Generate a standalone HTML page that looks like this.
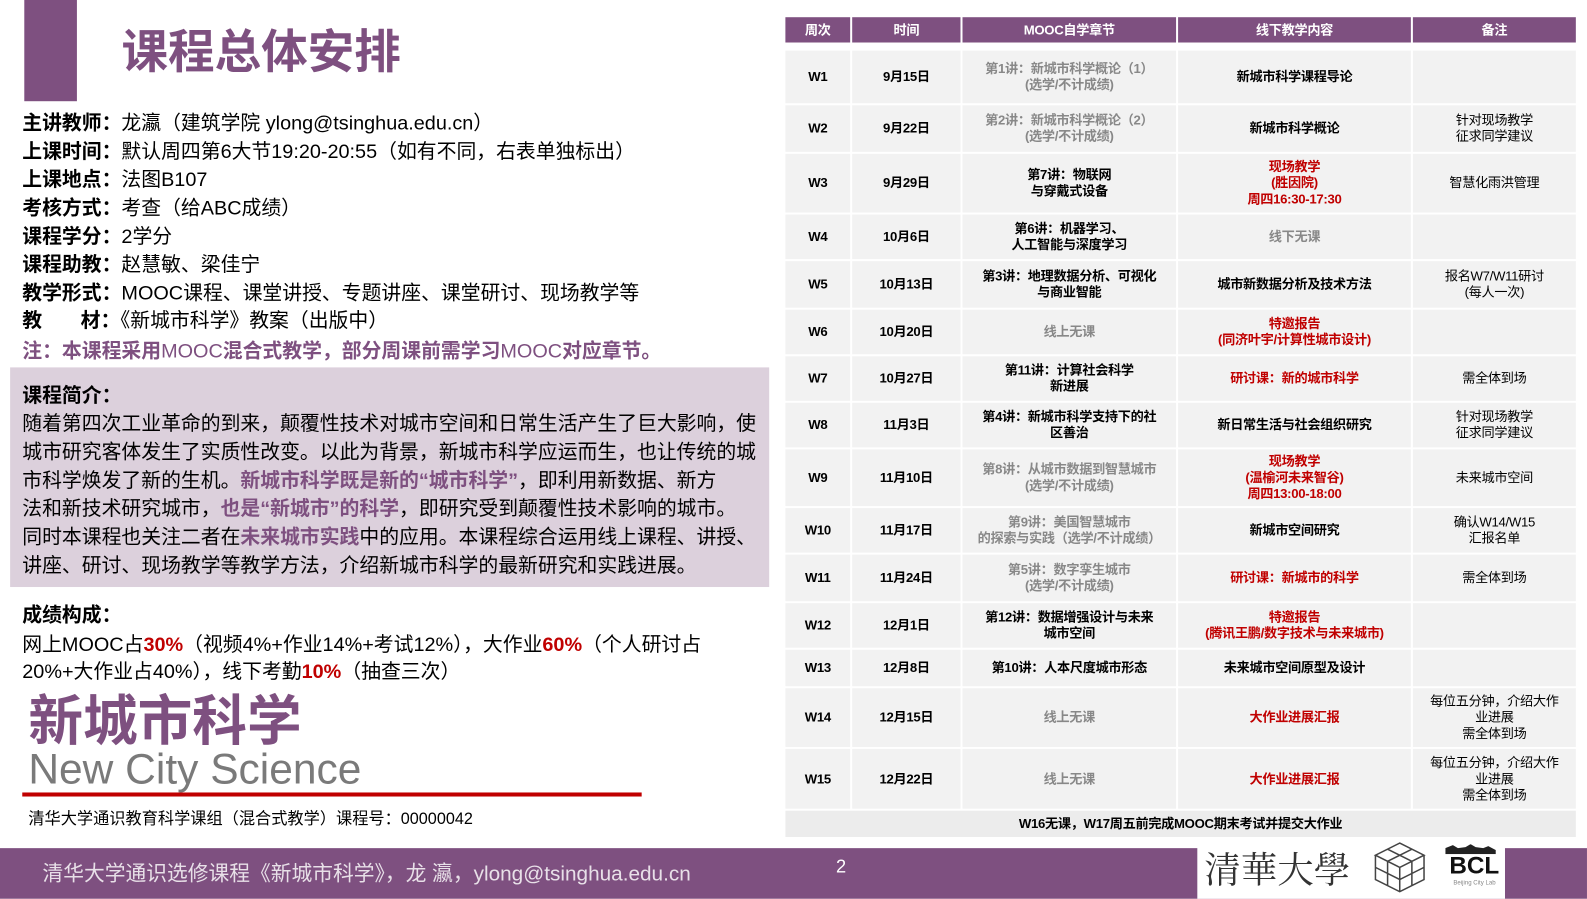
<!DOCTYPE html>
<html><head><meta charset="utf-8"><style>
*{margin:0;padding:0;box-sizing:border-box}
body{width:1587px;height:892px;position:relative;background:#fff;font-family:"Liberation Sans","Noto Sans CJK SC",sans-serif;overflow:hidden;color:#000}
#w{position:absolute;left:0;top:0;width:1568px;height:882px;transform:scale(1.0121);transform-origin:0 0}
.abs{position:absolute;white-space:nowrap}
.pu{color:#7e5080}
.l{font-size:19.6px;left:22px}
.b{font-weight:bold}
.red{color:#c00000}
table{position:absolute;left:774px;top:15px;border-collapse:separate;border-spacing:2px;font-size:13px;font-weight:bold;text-align:center;line-height:16px;letter-spacing:-0.3px}
td{background:#f2f2f2;padding:0 1px;white-space:nowrap}
th{background:#7e5080;color:#fff;height:25px;font-size:13px}
.g{color:#888}
.n{font-weight:normal}
</style></head><body><div id="w">
<div class="abs" style="left:24px;top:0;width:52px;height:100px;background:#7e5080"></div>
<div class="abs pu b" style="left:120px;top:15px;font-size:46px">课程总体安排</div>

<div class="abs l" style="top:105px"><b>主讲教师：</b>龙瀛（建筑学院 ylong@tsinghua.edu.cn）</div>
<div class="abs l" style="top:133px"><b>上课时间：</b>默认周四第6大节19:20-20:55（如有不同，右表单独标出）</div>
<div class="abs l" style="top:161px"><b>上课地点：</b>法图B107</div>
<div class="abs l" style="top:189px"><b>考核方式：</b>考查（给ABC成绩）</div>
<div class="abs l" style="top:217px"><b>课程学分：</b>2学分</div>
<div class="abs l" style="top:245px"><b>课程助教：</b>赵慧敏、梁佳宁</div>
<div class="abs l" style="top:273px"><b>教学形式：</b>MOOC课程、课堂讲授、专题讲座、课堂研讨、现场教学等</div>
<div class="abs l" style="top:300px"><b>教&nbsp;&nbsp;&nbsp;&nbsp;&nbsp;&nbsp;&nbsp;材：</b>《新城市科学》教案（出版中）</div>
<div class="abs l pu b" style="top:330px">注：本课程采用<span style="font-weight:normal">MOOC</span>混合式教学，部分周课前需学习<span style="font-weight:normal">MOOC</span>对应章节。</div>

<div class="abs" style="left:10px;top:363px;width:750px;height:217px;background:#dcd0dc"></div>
<div class="abs l b" style="top:374px">课程简介：</div>
<div class="abs l" style="top:402px">随着第四次工业革命的到来，颠覆性技术对城市空间和日常生活产生了巨大影响，使</div>
<div class="abs l" style="top:430px">城市研究客体发生了实质性改变。以此为背景，新城市科学应运而生，也让传统的城</div>
<div class="abs l" style="top:458px">市科学焕发了新的生机。<b class="pu">新城市科学既是新的“城市科学”</b>，即利用新数据、新方</div>
<div class="abs l" style="top:486px">法和新技术研究城市，<b class="pu">也是“新城市”的科学</b>，即研究受到颠覆性技术影响的城市。</div>
<div class="abs l" style="top:514px">同时本课程也关注二者在<b class="pu">未来城市实践</b>中的应用。本课程综合运用线上课程、讲授、</div>
<div class="abs l" style="top:542px">讲座、研讨、现场教学等教学方法，介绍新城市科学的最新研究和实践进展。</div>

<div class="abs l b" style="top:591px">成绩构成：</div>
<div class="abs l" style="top:620px">网上MOOC占<b class="red">30%</b>（视频4%+作业14%+考试12%），大作业<b class="red">60%</b>（个人研讨占</div>
<div class="abs l" style="top:647px">20%+大作业占40%），线下考勤<b class="red">10%</b>（抽查三次）</div>

<div class="abs pu b" style="left:28px;top:668px;font-size:54px">新城市科学</div>
<div class="abs" style="left:28px;top:736px;font-size:42px;color:#7a7a7a">New City Science</div>
<div class="abs" style="left:22px;top:783px;width:612px;height:4px;background:#c00000"></div>
<div class="abs" style="left:28px;top:795px;font-size:16px">清华大学通识教育科学课组（混合式教学）课程号：00000042</div>

<table style="left:774px;top:15px">
<tr><th style="width:64px">周次</th><th style="width:107px">时间</th><th style="width:211px">MOOC自学章节</th><th style="width:230px">线下教学内容</th><th style="width:161px">备注</th></tr>
<tr style="height:4px"><td colspan="5" style="background:#fff;height:2px;padding:0"></td></tr>
<tr style="height:52px"><td>W1</td><td>9月15日</td><td class="g">第1讲：新城市科学概论（1）<br>(选学/不计成绩)</td><td>新城市科学课程导论</td><td></td></tr>
<tr style="height:46px"><td>W2</td><td>9月22日</td><td class="g">第2讲：新城市科学概论（2）<br>(选学/不计成绩)</td><td>新城市科学概论</td><td class="n">针对现场教学<br>征求同学建议</td></tr>
<tr style="height:58px"><td>W3</td><td>9月29日</td><td>第7讲：物联网<br>与穿戴式设备</td><td class="red">现场教学<br>(胜因院)<br>周四16:30-17:30</td><td class="n">智慧化雨洪管理</td></tr>
<tr style="height:44px"><td>W4</td><td>10月6日</td><td>第6讲：机器学习、<br>人工智能与深度学习</td><td class="g">线下无课</td><td></td></tr>
<tr style="height:46px"><td>W5</td><td>10月13日</td><td>第3讲：地理数据分析、可视化<br>与商业智能</td><td>城市新数据分析及技术方法</td><td class="n">报名W7/W11研讨<br>(每人一次)</td></tr>
<tr style="height:44px"><td>W6</td><td>10月20日</td><td class="g">线上无课</td><td class="red">特邀报告<br>(同济叶宇/计算性城市设计)</td><td></td></tr>
<tr style="height:44px"><td>W7</td><td>10月27日</td><td>第11讲：计算社会科学<br>新进展</td><td class="red">研讨课：新的城市科学</td><td class="n">需全体到场</td></tr>
<tr style="height:44px"><td>W8</td><td>11月3日</td><td>第4讲：新城市科学支持下的社<br>区善治</td><td>新日常生活与社会组织研究</td><td class="n">针对现场教学<br>征求同学建议</td></tr>
<tr style="height:56px"><td>W9</td><td>11月10日</td><td class="g">第8讲：从城市数据到智慧城市<br>(选学/不计成绩)</td><td class="red">现场教学<br>(温榆河未来智谷)<br>周四13:00-18:00</td><td class="n">未来城市空间</td></tr>
<tr style="height:44px"><td>W10</td><td>11月17日</td><td class="g">第9讲：美国智慧城市<br>的探索与实践（选学/不计成绩）</td><td>新城市空间研究</td><td class="n">确认W14/W15<br>汇报名单</td></tr>
<tr style="height:46px"><td>W11</td><td>11月24日</td><td class="g">第5讲：数字孪生城市<br>(选学/不计成绩)</td><td class="red">研讨课：新城市的科学</td><td class="n">需全体到场</td></tr>
<tr style="height:44px"><td>W12</td><td>12月1日</td><td>第12讲：数据增强设计与未来<br>城市空间</td><td class="red">特邀报告<br>(腾讯王鹏/数字技术与未来城市)</td><td></td></tr>
<tr style="height:36px"><td>W13</td><td>12月8日</td><td>第10讲：人本尺度城市形态</td><td>未来城市空间原型及设计</td><td></td></tr>
<tr style="height:58px"><td>W14</td><td>12月15日</td><td class="g">线上无课</td><td class="red">大作业进展汇报</td><td class="n">每位五分钟，介绍大作<br>业进展<br>需全体到场</td></tr>
<tr style="height:59px"><td>W15</td><td>12月22日</td><td class="g">线上无课</td><td class="red">大作业进展汇报</td><td class="n">每位五分钟，介绍大作<br>业进展<br>需全体到场</td></tr>
<tr style="height:26px"><td colspan="5" style="background:#ececec">W16无课，W17周五前完成MOOC期末考试并提交大作业</td></tr>
</table>

<div class="abs" style="left:0;top:838px;width:1568px;height:50px;background:#7e5080"></div>
<div class="abs" style="left:42px;top:846px;font-size:20.5px;color:#e8e0e8">清华大学通识选修课程《新城市科学》，龙&nbsp;瀛，ylong@tsinghua.edu.cn</div>
<div class="abs" style="left:826px;top:846px;font-size:18px;color:#fff">2</div>
<div class="abs" style="left:1183px;top:830px;width:304px;height:58px;background:#fff"></div>
<div class="abs" style="left:1190px;top:832px;font-size:36px;font-family:'Noto Serif CJK SC',serif;color:#333;letter-spacing:0px">清華大學</div>
<svg class="abs" style="left:1355px;top:831px" width="56" height="52" viewBox="0 0 56 52" fill="none" stroke="#444" stroke-width="1.5"><path d="M28 2 L52 14 L28 26 L4 14 Z M4 14 V38 L28 50 L52 38 V14 M16 8 L40 20 M40 8 L16 20 M28 26 V50 M16 20 V44 M40 20 V44 M4 26 L28 38 L52 26"/></svg>
<div class="abs" style="left:1428px;top:834px;width:50px;height:10px;background:#222;clip-path:polygon(0 100%,0 40%,15% 10%,25% 40%,40% 30%,50% 0,60% 30%,75% 40%,85% 20%,100% 60%,100% 100%)"></div>
<div class="abs" style="left:1432px;top:842px;font-size:24px;font-weight:bold;color:#111">BCL</div>
<div class="abs" style="left:1436px;top:870px;font-size:6px;color:#888">Beijing City Lab</div>
</div></body></html>
